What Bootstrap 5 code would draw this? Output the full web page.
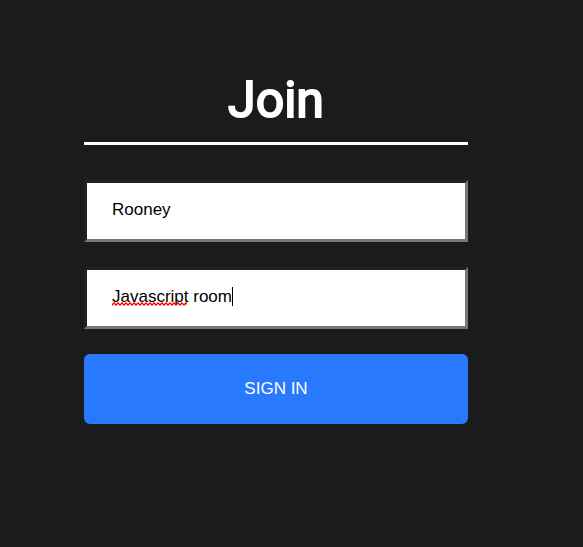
<!DOCTYPE html>
<html lang="en">
<head>
<meta charset="utf-8">
<meta name="viewport" content="width=device-width, initial-scale=1">
<title>Join</title>
<link href="https://cdn.jsdelivr.net/npm/bootstrap@5.3.0/dist/css/bootstrap.min.css" rel="stylesheet">
<style>
body { background: #1b1b1d; font-family: Roboto, sans-serif; }
.join-panel { padding: 70px 115px 40px 84px; }
.join-title { font-size: 50px; line-height: 60px; font-weight: 400; -webkit-text-stroke: 2px #fff; padding-bottom: 12px; border-bottom: 3px solid #fff; margin-bottom: 35px; }
.join-field { margin-bottom: 25px; }
.join-input { height: 62px; padding: 0 25px 3px; border: 3px inset #767676; background: #fff; color: #000; font: 17px "Liberation Sans", sans-serif; outline: 0; }
.join-button { height: 70px; border-radius: 6px; background: #2979ff; font: 17px "Liberation Sans", sans-serif; }
.spell-wave { left: 28px; top: 35px; }
.text-caret { left: 148px; top: 20px; width: 1px; height: 19px; background: #000; }
</style>
</head>
<body>
<main class="join-panel">
<h1 class="join-title text-white text-center">Join</h1>
<form>
<div class="join-field">
<input class="join-input d-block w-100 rounded-0" type="text" aria-label="Name" value="Rooney">
</div>
<div class="join-field position-relative">
<input class="join-input d-block w-100 rounded-0" type="text" aria-label="Room" value="Javascript room" spellcheck="true">
<svg class="spell-wave position-absolute pe-none" width="75" height="4" aria-hidden="true"><defs><pattern id="wave" width="4" height="4" patternUnits="userSpaceOnUse"><path d="M-1 2 0 3 2 1 4 3 5 2" fill="none" stroke="#f00" stroke-width="1.4"/></pattern></defs><rect width="75" height="4" fill="url(#wave)"/></svg>
<span class="text-caret position-absolute pe-none" aria-hidden="true"></span>
</div>
<button class="join-button border-0 text-white w-100 text-uppercase" type="submit">Sign In</button>
</form>
</main>
<script src="https://cdn.jsdelivr.net/npm/bootstrap@5.3.0/dist/js/bootstrap.bundle.min.js"></script>
</body>
</html>
